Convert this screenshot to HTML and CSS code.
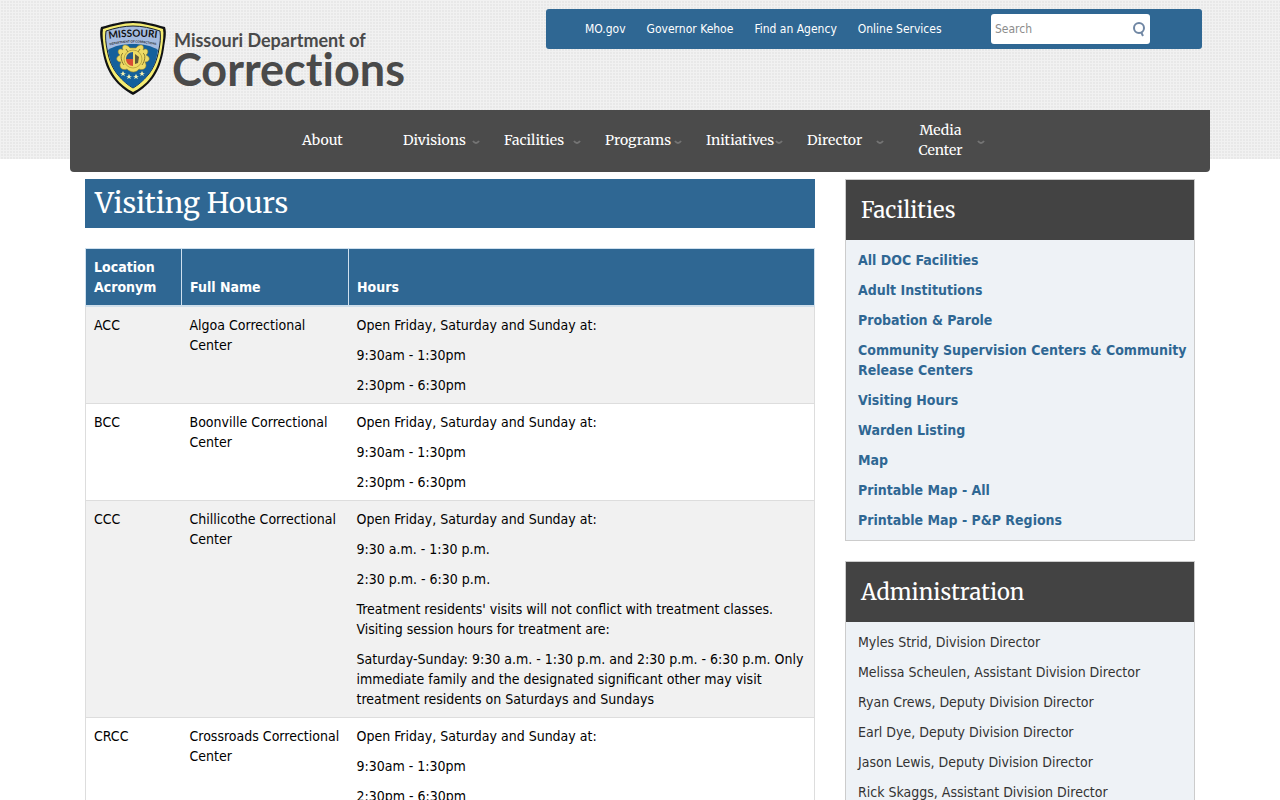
FILE: index.html
```html
<!DOCTYPE html>
<html lang="en">
<head>
<meta charset="utf-8">
<title>Visiting Hours | Missouri Department of Corrections</title>
<meta name="viewport" content="width=device-width, initial-scale=1">
<link rel="stylesheet" href="styles.css">
</head>
<body>
<header class="site-header">
  <div class="container">
    <div class="masthead">
      <a class="brand" href="#" aria-label="Missouri Department of Corrections home">
        <svg class="badge" viewBox="0 0 68 76" aria-hidden="true">
          <path d="M34 1C24 1 13 4 2 7C0 13 2 21 3 28C5 42 9 51 14 58C20 66 27 71 34 75C41 71 48 66 54 58C59 51 63 42 65 28C66 21 68 13 66 7C55 4 44 1 34 1Z" fill="#101214"/>
          <path d="M34 3C24 3 14 6 4 9C3 14 4 21 5 28C7 41 11 50 16 57C21 64 28 69 34 72C40 69 47 64 52 57C57 50 61 41 63 28C64 21 65 14 64 9C54 6 44 3 34 3Z" fill="#f4ec72"/>
          <path d="M34 6C25 6 16 8 7 11C6 18 7 24 8 29C10 41 14 49 19 55C24 61 29 65 34 68C39 65 44 61 49 55C54 49 58 41 60 29C61 24 62 18 61 11C52 8 43 6 34 6Z" fill="#a5bbdf" stroke="#17202c" stroke-width="1"/>
          <path d="M9 30C20 22 48 22 59 30C57 42 54 49 49 55C44 61 39 65 34 68C29 65 24 61 19 55C14 49 11 42 9 30Z" fill="#14609c"/>
          <path id="arc-top" d="M4 20Q34 14 64 19" fill="none"/>
          <path id="arc-mid" d="M4 27Q34 18 64 27" fill="none"/>
          <text class="badge-state"><textPath href="#arc-top" startOffset="50%" text-anchor="middle">MISSOURI</textPath></text>
          <text class="badge-dept"><textPath href="#arc-mid" startOffset="50%" text-anchor="middle">DEPARTMENT OF CORRECTIONS</textPath></text>
          <g fill="#eedb65" stroke="#9c8a2e" stroke-width=".6">
            <path d="M31 28C27 23 22 25 24 30C20 27 17 32 21 35C16 37 17 42 22 42C19 47 23 51 28 49C32 53 37 53 40 49C45 51 49 47 46 42C51 42 52 37 47 35C51 32 48 27 44 30C46 25 41 23 37 28Z"/>
            <circle cx="34" cy="39" r="9"/>
          </g>
          <path d="M34 32V39H27C27 35 30 32 34 32Z" fill="#245b8e"/>
          <path d="M27 39H34V46C30 46 27 43 27 39Z" fill="#d84b35"/>
          <path d="M36 34L40 37L39 43L36 44Z" fill="#5d5638"/>
          <path d="M24 33C21 35 22 41 25 45M44 33C47 35 46 41 43 45M27 29L29 32M41 29L39 32" fill="none" stroke="#8b7c2e"/>
          <g fill="#f4f0b0">
            <path id="star" d="M24 51L25 53L27 53L25 54L26 56L24 55L22 56L23 54L21 53L23 53Z"/>
            <use href="#star" x="6" y="3"/><use href="#star" x="13" y="3"/><use href="#star" x="19"/>
          </g>
        </svg>
        <span class="brand-text">
          <span class="brand-small">Missouri Department of</span>
          <span class="brand-large">Corrections</span>
        </span>
      </a>
      <div class="utility">
        <nav class="utility-links" aria-label="State links">
          <a href="#">MO.gov</a>
          <a href="#">Governor Kehoe</a>
          <a href="#">Find an Agency</a>
          <a href="#">Online Services</a>
        </nav>
        <form class="search" role="search">
          <input type="search" placeholder="Search" aria-label="Search">
          <button type="submit" aria-label="Submit search">
            <svg viewBox="0 0 14 17" aria-hidden="true"><circle cx="7" cy="7" r="5" fill="none" stroke="#6f86a3" stroke-width="2"/><path d="M9 11L11 15" fill="none" stroke="#6f86a3" stroke-width="2"/></svg>
          </button>
        </form>
      </div>
    </div>
    <nav class="main-nav" aria-label="Main">
      <ul>
        <li><a href="#">About</a></li>
        <li><a href="#">Divisions</a><svg class="caret" viewBox="0 0 8 6" aria-hidden="true"><path d="M1 2Q4 6 7 2"/></svg></li>
        <li><a href="#">Facilities</a><svg class="caret" viewBox="0 0 8 6" aria-hidden="true"><path d="M1 2Q4 6 7 2"/></svg></li>
        <li><a href="#">Programs</a><svg class="caret" viewBox="0 0 8 6" aria-hidden="true"><path d="M1 2Q4 6 7 2"/></svg></li>
        <li><a href="#">Initiatives</a><svg class="caret" viewBox="0 0 8 6" aria-hidden="true"><path d="M1 2Q4 6 7 2"/></svg></li>
        <li><a href="#">Director</a><svg class="caret" viewBox="0 0 8 6" aria-hidden="true"><path d="M1 2Q4 6 7 2"/></svg></li>
        <li><a href="#">Media Center</a><svg class="caret" viewBox="0 0 8 6" aria-hidden="true"><path d="M1 2Q4 6 7 2"/></svg></li>
      </ul>
    </nav>
  </div>
</header>
<div class="container page">
  <main class="content">
    <h1>Visiting Hours</h1>
    <table class="hours">
      <colgroup><col class="col-acronym"><col class="col-name"><col></colgroup>
      <thead>
        <tr><th scope="col">Location Acronym</th><th scope="col">Full Name</th><th scope="col">Hours</th></tr>
      </thead>
      <tbody>
        <tr><td>ACC</td><td>Algoa Correctional Center</td><td><p>Open Friday, Saturday and Sunday at:</p><p>9:30am - 1:30pm</p><p>2:30pm - 6:30pm</p></td></tr>
        <tr><td>BCC</td><td>Boonville Correctional Center</td><td><p>Open Friday, Saturday and Sunday at:</p><p>9:30am - 1:30pm</p><p>2:30pm - 6:30pm</p></td></tr>
        <tr><td>CCC</td><td>Chillicothe Correctional Center</td><td><p>Open Friday, Saturday and Sunday at:</p><p>9:30 a.m. - 1:30 p.m.</p><p>2:30 p.m. - 6:30 p.m.</p><p>Treatment residents' visits will not conflict with treatment classes. Visiting session hours for treatment are:</p><p>Saturday-Sunday: 9:30 a.m. - 1:30 p.m. and 2:30 p.m. - 6:30 p.m. Only immediate family and the designated significant other may visit treatment residents on Saturdays and Sundays</p></td></tr>
        <tr><td>CRCC</td><td>Crossroads Correctional Center</td><td><p>Open Friday, Saturday and Sunday at:</p><p>9:30am - 1:30pm</p><p>2:30pm - 6:30pm</p></td></tr>
      </tbody>
    </table>
  </main>
  <aside class="sidebar">
    <section class="panel">
      <h2>Facilities</h2>
      <ul class="panel-links">
        <li><a href="#">All DOC Facilities</a></li>
        <li><a href="#">Adult Institutions</a></li>
        <li><a href="#">Probation &amp; Parole</a></li>
        <li><a href="#">Community Supervision Centers &amp; Community Release Centers</a></li>
        <li><a href="#">Visiting Hours</a></li>
        <li><a href="#">Warden Listing</a></li>
        <li><a href="#">Map</a></li>
        <li><a href="#">Printable Map - All</a></li>
        <li><a href="#">Printable Map - P&amp;P Regions</a></li>
      </ul>
    </section>
    <section class="panel">
      <h2>Administration</h2>
      <ul>
        <li>Myles Strid, Division Director</li>
        <li>Melissa Scheulen, Assistant Division Director</li>
        <li>Ryan Crews, Deputy Division Director</li>
        <li>Earl Dye, Deputy Division Director</li>
        <li>Jason Lewis, Deputy Division Director</li>
        <li>Rick Skaggs, Assistant Division Director</li>
      </ul>
    </section>
  </aside>
</div>
</body>
</html>
```
FILE: styles.css
```css
*, *::before, *::after { box-sizing: border-box; }

body {
  margin: 0;
  background: #fff;
  color: #000;
  font: 14px/20px Tahoma, "DejaVu Sans Condensed", sans-serif;
}

a { text-decoration: none; }
ul { list-style: none; margin: 0; padding: 0; }

.container { max-width: 1140px; margin: 0 auto; }

/* Header */
.site-header {
  display: flow-root;
  background-color: #e8e8e8;
  background-image:
    linear-gradient(#f1f1f1 1px, transparent 1px),
    linear-gradient(90deg, #f1f1f1 1px, transparent 1px);
  background-size: 3px 3px;
}

.masthead {
  display: flex;
  justify-content: space-between;
  align-items: flex-start;
  min-height: 110px;
  padding: 9px 8px 0 29px;
}

.brand { display: flex; color: #4a4a4a; padding-top: 11px; gap: 5px; }
.badge { width: 68px; height: 76px; }
.badge-state { font: bold 10px Lato, sans-serif; fill: #111; }
.badge-dept { font: bold 3px Lato, sans-serif; fill: #222; }
.brand-text {
  display: flex;
  flex-direction: column;
  padding-top: 10px;
  font-family: "Century Gothic", Lato, sans-serif;
  font-weight: 700;
  font-variant-ligatures: none;
}
.brand-small { font-size: 18px; line-height: 20px; padding-left: 2px; }
.brand-large { font-size: 45px; line-height: 38px; }

.utility {
  display: flex;
  align-items: center;
  justify-content: space-between;
  width: 656px;
  min-height: 40px;
  padding: 4px 52px 4px 39px;
  background: #2f6793;
  border-radius: 3px;
}
.utility-links { display: flex; gap: 21px; font-size: 12px; }
.utility-links a { color: #fff; }
.search { display: flex; align-items: center; width: 159px; height: 30px; padding: 0 4px; background: #fff; border-radius: 3px; }
.search input { flex: 1; min-width: 0; border: 0; padding: 0; background: none; color: #333; font: inherit; font-size: 12px; outline: 0; }
.search input::placeholder { color: #8c8c8c; opacity: 1; }
.search button { display: flex; border: 0; padding: 0; background: none; cursor: pointer; }
.search svg { width: 14px; height: 17px; }

.main-nav {
  display: flex;
  justify-content: center;
  min-height: 62px;
  margin-bottom: -13px;
  padding-left: 5px;
  background: #4b4b4b;
  border-radius: 0 0 4px 4px;
}
.main-nav ul { display: grid; grid-template-columns: repeat(7, 101px); align-items: start; }
.main-nav li { display: flex; align-items: center; justify-content: space-between; padding: 0 11px 0 13px; min-height: 60px; }
.main-nav li:last-child { padding-left: 9px; text-align: center; }
.main-nav a { color: #fff; font: 14px/20px Merriweather, "DejaVu Serif Condensed", serif; }
.caret { flex: none; width: 8px; height: 6px; margin-top: 4px; fill: none; stroke: #747474; stroke-width: 2; }

/* Page */
.page { display: flex; padding: 20px 15px 0; gap: 30px; align-items: flex-start; }
.content { flex: 730; min-width: 0; }
.sidebar { flex: 350; min-width: 0; }

h1, h2 { margin: 0; color: #fff; font-family: Merriweather, "DejaVu Serif Condensed", serif; font-weight: 400; }
h1 { padding: 4px 10px 5px; background: #2f6793; font-size: 28px; line-height: 40px; }

.hours { width: 100%; margin-top: 20px; border-collapse: collapse; table-layout: fixed; border: 1px solid #ddd; }
.col-acronym { width: 96px; }
.col-name { width: 167px; }
.hours th { padding: 8px; background: #2f6793; color: #fff; text-align: left; vertical-align: bottom; border: 1px solid #cfe0ee; border-bottom: 2px solid #cfdeea; }
.hours td { padding: 8px; vertical-align: top; border-top: 1px solid #ddd; }
.hours tbody tr:nth-child(odd) { background: #f1f1f1; }
.hours p { margin: 0 0 10px; }
.hours p:last-child { margin-bottom: 0; }

.panel { margin: 0 0 20px; border: 1px solid #ccc; background: #eef2f6; color: #333; }
.panel h2 { padding: 10px 15px; background: #434343; font-size: 22px; line-height: 40px; }
.panel ul { display: flex; flex-direction: column; gap: 10px; padding: 10px 4px 10px 12px; }
.panel-links a { color: #2f6793; font-weight: 700; }
```
